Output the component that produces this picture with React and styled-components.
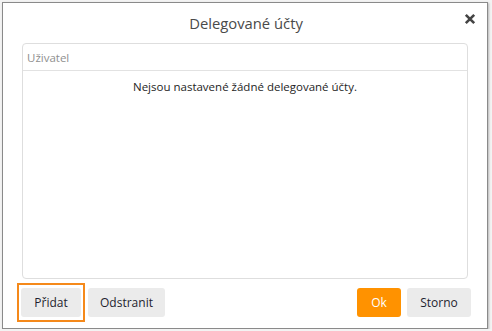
import React from 'react';
import styled, { createGlobalStyle } from 'styled-components';

const GlobalStyle = createGlobalStyle`
  html, body {
    margin: 0;
    padding: 0;
    background: #f3f3f3;
  }
  body {
    font-family: "Open Sans", "Noto Sans", sans-serif;
  }
`

const Window = styled.div`
  box-sizing: border-box;
  width: 486px;
  height: 327px;
  margin: 2px 0 0 2px;
  background: #fff;
  border: 1px solid #8a8a8a;
  box-shadow: 1px 1px 2px rgba(0, 0, 0, 0.25);
  display: flex;
  flex-direction: column;
  padding: 0 16px 11px 18px;
`

const Header = styled.div`
  position: relative;
  height: 40px;
  display: flex;
  align-items: center;
  justify-content: center;
`

const Title = styled.h1`
  margin: 0 0 1px;
  font-size: 14.8px;
  font-weight: 400;
  color: #4a4a4a;
`

const Close = styled.button`
  position: absolute;
  right: -5px;
  top: 10px;
  width: 12px;
  height: 12px;
  padding: 0;
  border: none;
  background: none;
  display: flex;
  cursor: pointer;
`

const Table = styled.div`
  flex: 1;
  margin: 0 3px 0 1px;
  border: 1px solid #dedede;
  border-radius: 4px;
  display: flex;
  flex-direction: column;
`

const HeadCell = styled.div`
  height: 26px;
  line-height: 27px;
  padding-left: 4px;
  border-bottom: 1px solid #e2e2e2;
  font-size: 11.5px;
  color: #8f8f8f;
`

const Empty = styled.div`
  padding-top: 8px;
  text-align: center;
  font-size: 11.5px;
  color: #1e1e1e;
`

const Footer = styled.div`
  display: flex;
  align-items: center;
  margin-top: 9px;
`

const Spacer = styled.div`
  flex: 1;
`

const Button = styled.button`
  position: relative;
  width: ${p => p.$w}px;
  height: 29px;
  margin-left: ${p => p.$gap || 0}px;
  padding: 0;
  border: none;
  border-radius: 3px;
  background: ${p => (p.$primary ? '#ff9200' : '#ebebeb')};
  color: ${p => (p.$primary ? '#fff' : '#1f1f2f')};
  font-family: inherit;
  font-size: 12px;
  outline: none;
  cursor: pointer;

  &::after {
    content: '';
    display: ${p => (p.$focused ? 'block' : 'none')};
    position: absolute;
    inset: -5px -4px -5px -4px;
    border: 2px solid #f5891a;
  }
`

const CloseIcon = () => (
  <svg width="12" height="12" viewBox="0 0 12 12">
    <path d="M1.8 1.8 L10.2 10.2 M10.2 1.8 L1.8 10.2" stroke="#444" strokeWidth="2.6" />
  </svg>
)

export default function App() {
  return (
    <>
      <GlobalStyle />
      <Window>
        <Header>
          <Title>Delegované účty</Title>
          <Close aria-label="Zavřít"><CloseIcon /></Close>
        </Header>
        <Table>
          <HeadCell>Uživatel</HeadCell>
          <Empty>Nejsou nastavené žádné delegované účty.</Empty>
        </Table>
        <Footer>
          <Button $focused $w={60}>Přidat</Button>
          <Button $w={77} $gap={7}>Odstranit</Button>
          <Spacer />
          <Button $primary $w={44}>Ok</Button>
          <Button $w={64} $gap={6}>Storno</Button>
        </Footer>
      </Window>
    </>
  );
}
